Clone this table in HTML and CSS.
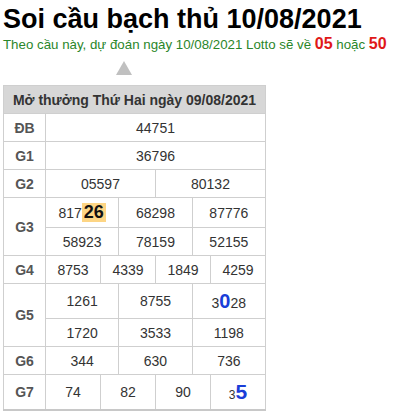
FILE: index.html
```html
<!DOCTYPE html>
<html lang="vi">
<head>
<meta charset="utf-8">
<link rel="stylesheet" href="styles.css">
</head>
<body>
<h1 class="title">Soi cầu bạch thủ 10/08/2021</h1>
<p class="predict">Theo cầu này, dự đoán ngày 10/08/2021 Lotto sẽ về <b class="num">05</b> hoặc <b class="num">50</b></p>
<div class="arrow"></div>
<table class="kq">
  <colgroup>
    <col class="c-label">
    <col><col><col><col><col><col><col><col><col><col><col><col>
  </colgroup>
  <tr><th class="head" colspan="13">Mở thưởng Thứ Hai ngày 09/08/2021</th></tr>
  <tr><td class="lbl">ĐB</td><td colspan="12">44751</td></tr>
  <tr><td class="lbl">G1</td><td colspan="12">36796</td></tr>
  <tr><td class="lbl">G2</td><td colspan="6">05597</td><td colspan="6">80132</td></tr>
  <tr class="tall"><td class="lbl" rowspan="2">G3</td><td colspan="4">817<span class="hl">26</span></td><td colspan="4">68298</td><td colspan="4">87776</td></tr>
  <tr><td colspan="4">58923</td><td colspan="4">78159</td><td colspan="4">52155</td></tr>
  <tr><td class="lbl">G4</td><td colspan="3">8753</td><td colspan="3">4339</td><td colspan="3">1849</td><td colspan="3">4259</td></tr>
  <tr class="taller"><td class="lbl" rowspan="2">G5</td><td colspan="4">1261</td><td colspan="4">8755</td><td colspan="4">3<b class="blue">0</b>28</td></tr>
  <tr><td colspan="4">1720</td><td colspan="4">3533</td><td colspan="4">1198</td></tr>
  <tr><td class="lbl">G6</td><td colspan="4">344</td><td colspan="4">630</td><td colspan="4">736</td></tr>
  <tr class="taller last"><td class="lbl">G7</td><td colspan="3">74</td><td colspan="3">82</td><td colspan="3">90</td><td colspan="3"><span class="small">3</span><b class="blue big">5</b></td></tr>
</table>
</body>
</html>
```
FILE: styles.css
```css
html, body {
  margin: 0;
  padding: 0;
  background: #ffffff;
}
body {
  padding: 4px 3px 0 3px;
  font-family: "Liberation Sans", Arial, sans-serif;
  color: #333;
}
.title {
  margin: 0;
  font-size: 27px;
  line-height: 30px;
  font-weight: 700;
  color: #000;
}
.predict {
  margin: 0;
  font-size: 13.3px;
  line-height: 20px;
  color: #2a862a;
}
.predict .num {
  color: #e01818;
  font-size: 16px;
}
.arrow {
  width: 0;
  height: 0;
  margin: 6px 0 10px 113px;
  border-left: 8px solid transparent;
  border-right: 8px solid transparent;
  border-bottom: 14px solid #c0c0c0;
}
.kq {
  width: 263px;
  table-layout: fixed;
  border-collapse: collapse;
  border: 1px solid #c8c8c8;
  border-bottom-width: 2px;
  font-size: 14px;
}
.c-label {
  width: 42px;
}
.kq th, .kq td {
  border: 1px solid #cfcfcf;
  padding: 0;
  height: 27px;
  text-align: center;
  vertical-align: middle;
  white-space: nowrap;
}
.kq .head {
  background: #d7d7d7;
  font-size: 14px;
  font-weight: 700;
  color: #333;
  height: 27px;
}
.kq .lbl {
  font-weight: 700;
  color: #555;
}
.kq .tall td {
  height: 29px;
}
.kq .taller td {
  height: 34px;
}
.hl {
  display: inline-block;
  background: #fdd584;
  color: #111;
  font-weight: 700;
  font-size: 18px;
  line-height: 19px;
  padding: 0 2px;
}
.blue {
  color: #1a3ed8;
  font-size: 20px;
}
.small {
  font-size: 12px;
}
.big {
  font-size: 21px;
}
```
